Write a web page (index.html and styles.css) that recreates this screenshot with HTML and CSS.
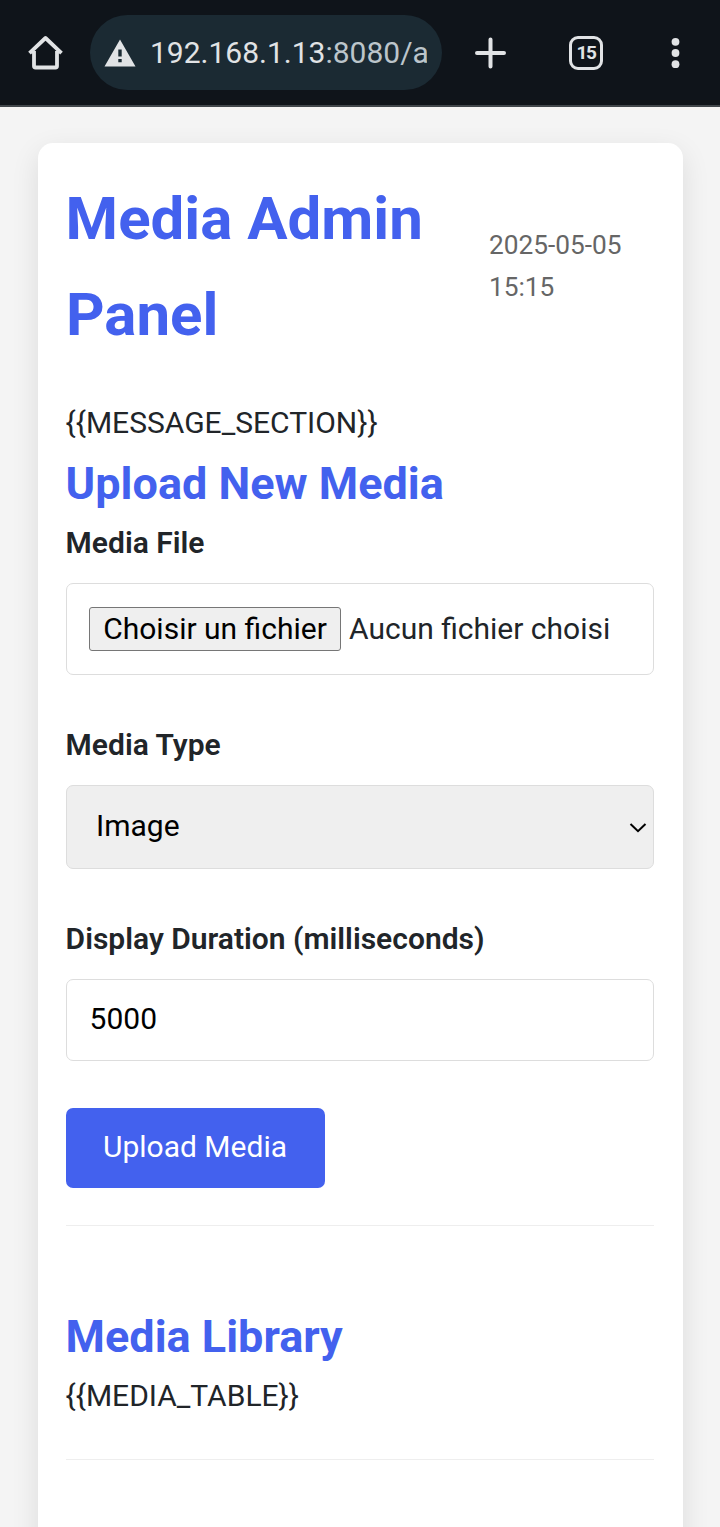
FILE: index.html
```html
<!DOCTYPE html>
<html lang="en">
<head>
<meta charset="utf-8">
<title>Media Admin Panel</title>
<link rel="stylesheet" href="styles.css">
</head>
<body>
<header class="browser-bar">
  <svg class="home" width="36" height="36" viewBox="0 0 36 36"><path d="M2.5 18.2 18.5 3 34.5 18.2M7 16V31a1.5 1.5 0 0 0 1.5 1.5H28.5a1.5 1.5 0 0 0 1.5-1.5V16" /></svg>
  <div class="address">
    <svg class="warning" width="32" height="28" viewBox="0 0 32 28"><path fill-rule="evenodd" d="M16 .5 31.5 27.5H.5ZM14.3 10.5V17.5H17.7V10.5ZM14.3 20V23.2H17.7V20Z"/></svg>
    <span class="url">192.168.1.13<span class="path">:8080/a</span></span>
  </div>
  <svg class="plus" width="32" height="32" viewBox="0 0 32 32"><path d="M16.5 2.5V29.5M3 16H30"/></svg>
  <div class="tabs">15</div>
  <svg class="more" width="10" height="32" viewBox="0 0 10 32"><circle cx="5.5" cy="4.8" r="3.9"/><circle cx="5.5" cy="16" r="3.9"/><circle cx="5.5" cy="27.2" r="3.9"/></svg>
</header>
<main class="card">
  <div class="heading">
    <h1>Media Admin Panel</h1>
    <div class="date">2025-05-05 15:15</div>
  </div>
  <div class="text">{{MESSAGE_SECTION}}</div>
  <section class="upload">
    <h2>Upload New Media</h2>
    <div class="label">Media File</div>
    <div class="field file"><button class="choose">Choisir un fichier</button><span class="chosen">Aucun fichier choisi</span></div>
    <div class="label">Media Type</div>
    <div class="field select"><span>Image</span><svg width="18" height="12" viewBox="0 0 18 12"><path d="M1.5 2 9 9.2 16.5 2"/></svg></div>
    <div class="label">Display Duration (milliseconds)</div>
    <div class="field number">5000</div>
    <button class="submit">Upload Media</button>
  </section>
  <section class="library">
    <h2>Media Library</h2>
    <div class="text">{{MEDIA_TABLE}}</div>
  </section>
</main>
</body>
</html>
```
FILE: styles.css
```css
* { box-sizing: border-box; }
html { background: #f4f4f4; }
body {
  margin: 0;
  height: 1527px;
  overflow: hidden;
  background: #f4f4f4;
  color: #212529;
  font: 30px/48px Roboto, sans-serif;
}
button { font: inherit; margin: 0; }
.browser-bar {
  display: flex;
  align-items: center;
  height: 107px;
  padding: 0 0 0 27px;
  background: #0f141a;
  border-bottom: 2px solid #40464b;
}
.browser-bar svg { flex: none; }
.home { fill: none; stroke: #e1e3e5; stroke-width: 3.8; stroke-linejoin: round; stroke-linecap: butt; }
.address {
  display: flex;
  align-items: center;
  width: 352px;
  height: 75px;
  margin-left: 27px;
  padding: 0 14px;
  border-radius: 38px;
  background: #1b2a33;
}
.warning { fill: #e1e3e5; }
.url { margin-left: 14px; width: 277px; overflow: hidden; white-space: nowrap; color: #e1e3e5; }
.path { color: #bcc5cb; }
.plus { margin-left: 32px; fill: none; stroke: #e1e3e5; stroke-width: 4; stroke-linecap: round; }
.tabs {
  width: 34px;
  height: 34px;
  margin-left: 63px;
  border: 3.5px solid #e1e3e5;
  border-radius: 9px;
  color: #e1e3e5;
  font-size: 19px;
  font-weight: 700;
  line-height: 28px;
  text-align: center;
  letter-spacing: -1.5px;
}
.more { margin-left: 67px; fill: #e1e3e5; }
.card {
  width: 645px;
  height: 1460px;
  margin: 36px 0 0 38px;
  padding: 28px 29px 0 28px;
  border-radius: 15px;
  background: #fff;
  box-shadow: 0 9px 28px rgba(0, 0, 0, .1);
}
.heading { display: flex; align-items: center; justify-content: space-between; margin-bottom: 36px; }
h1, h2 { margin: 0; color: #4361ee; font-weight: 700; }
h1 { width: 380px; font-size: 60px; line-height: 96px; }
h2 { font-size: 45px; line-height: 72px; }
.date { width: 165px; padding-bottom: 2px; color: #666; font-size: 26.25px; line-height: 42px; }
h1, h2, .text, .label { text-indent: -.4px; }
.upload { height: 778px; margin-top: 1px; border-bottom: 1px solid #eee; }
.upload h2 { margin-bottom: -1px; }
.label { font-weight: 600; margin-bottom: 16px; }
.field {
  display: flex;
  align-items: center;
  border: 1px solid #ddd;
  border-radius: 7px;
  margin-bottom: 46px;
}
.file { height: 92px; padding-left: 22px; }
.choose {
  width: 252px;
  height: 44px;
  padding: 0;
  border: 1px solid #767676;
  border-radius: 3px;
  background: #efefef;
  color: #000;
  line-height: 40px;
}
.chosen { margin-left: 8px; }
.select { height: 84px; padding: 0 6px 2px 29px; justify-content: space-between; background: #efefef; color: #000; }
.select svg { fill: none; stroke: #000; stroke-width: 2; position: relative; top: 2px; }
.number { height: 82px; padding: 0 0 2px 22.6px; margin-bottom: 47px; color: #000; }
.submit {
  display: block;
  width: 259px;
  height: 80px;
  padding: 0 1px 2px 0;
  border: 0;
  border-radius: 7px;
  background: #4361ee;
  color: #fff;
}
.library { height: 234px; padding-top: 75px; border-bottom: 1px solid #eee; }
.library .text { margin-top: -1px; }
```
